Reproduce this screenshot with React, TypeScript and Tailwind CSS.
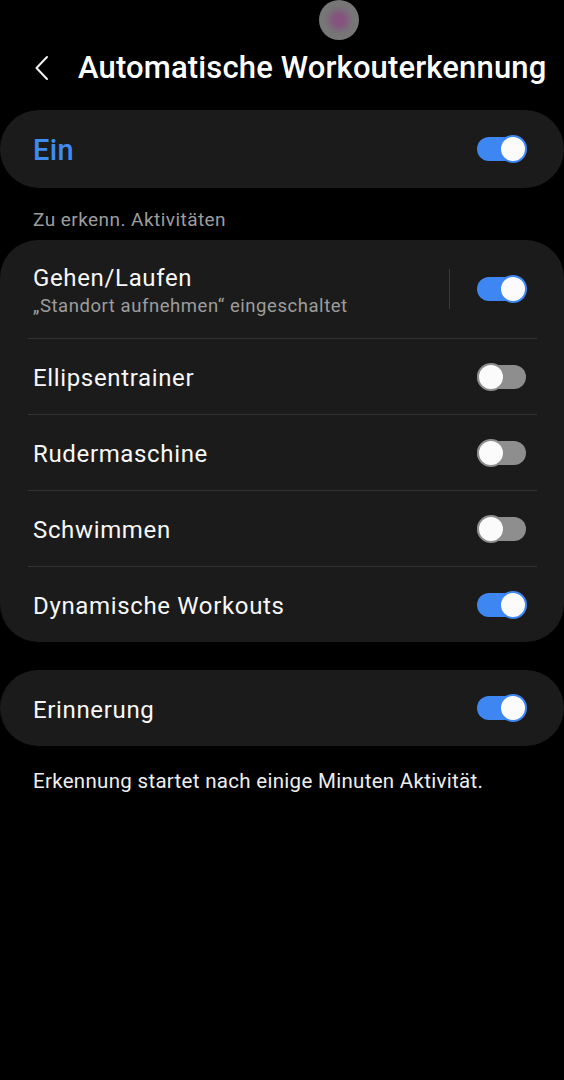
import React, { useState } from 'react';

type ToggleProps = { on: boolean; onClick?: () => void };

const Toggle: React.FC<ToggleProps> = ({ on, onClick }) => (
  <button onClick={onClick} className="relative w-[50px] h-[28px] shrink-0 focus:outline-none">
    <span
      className={`absolute left-0 right-[1px] top-[2px] h-[24px] rounded-full ${on ? 'bg-[#3e87f2]' : 'bg-[#8e8e8e]'}`}
    />
    <span
      className={`absolute top-0 w-[28px] h-[28px] rounded-full bg-[#fbfbfb] border-[2px] ${
        on ? 'right-0 border-[#3e87f2]' : 'left-0 border-[#8e8e8e]'
      }`}
    />
  </button>
);

const activities = [
  { name: 'Ellipsentrainer', on: false },
  { name: 'Rudermaschine', on: false },
  { name: 'Schwimmen', on: false },
  { name: 'Dynamische Workouts', on: true },
];

export default function App() {
  const [enabled, setEnabled] = useState(true);
  const [walking, setWalking] = useState(true);
  const [items, setItems] = useState(activities);
  const [reminder, setReminder] = useState(true);

  const flip = (i: number) =>
    setItems(items.map((it, j) => (j === i ? { ...it, on: !it.on } : it)));

  return (
    <div
      className="w-[564px] min-h-[1080px] bg-black text-[#f7f7f7]"
      style={{ fontFamily: 'Roboto, "Noto Sans", sans-serif' }}
    >
      {/* camera cutout */}
      <div className="h-[40px] flex">
        <div className="ml-[319px] w-[40px] h-[40px] rounded-full bg-[#777777] flex items-center justify-center">
          <div className="w-[20px] h-[20px] rounded-full bg-[#86517e] blur-[3px]" />
        </div>
      </div>

      {/* header */}
      <div className="h-[55px] flex items-center">
        <svg className="ml-[34px] w-[16px] h-[26px]" viewBox="0 0 16 26" fill="none">
          <path d="M13 2 L2.5 13 L13 24" stroke="#f2f2f2" strokeWidth="2" strokeLinecap="round" strokeLinejoin="round" />
        </svg>
        <h1 className="ml-[28px] pb-[1px] text-[31px] font-medium tracking-[0.15px] leading-none text-white">
          Automatische Workouterkennung
        </h1>
      </div>

      {/* master switch */}
      <div className="mt-[15px] h-[78px] rounded-[39px] bg-[#1b1b1b] flex items-center justify-between pl-[33px] pr-[37px]">
        <span className="pt-[3px] text-[29px] font-medium tracking-[0.4px] text-[#3f8cf0]">Ein</span>
        <Toggle on={enabled} onClick={() => setEnabled(!enabled)} />
      </div>

      <div className="h-[52px] pt-[12px] flex items-center pl-[33px] text-[19px] tracking-[0.45px] text-[#9d9d9d]">
        Zu erkenn. Aktivitäten
      </div>

      {/* activities */}
      <div className="rounded-[38px] bg-[#1b1b1b]">
        <div className="h-[98px] flex items-center pl-[33px] pr-[37px]">
          <div className="flex-1 flex flex-col pt-[4px]">
            <span className="text-[24px] tracking-[0.65px] leading-[30px]">Gehen/Laufen</span>
            <span className="text-[18.5px] tracking-[0.55px] leading-[26px] text-[#9d9d9d]">„Standort aufnehmen“ eingeschaltet</span>
          </div>
          <div className="w-px h-[40px] bg-[#3a3a3a] mr-[27px]" />
          <Toggle on={walking} onClick={() => setWalking(!walking)} />
        </div>
        {items.map((it, i) => (
          <div key={it.name}>
            <div className="mx-[28px] mr-[27px] h-px bg-[#333333]" />
            <div className="h-[75px] flex items-center justify-between pl-[33px] pr-[37px]">
              <span className="pt-[3px] text-[24px] tracking-[0.65px]">{it.name}</span>
              <Toggle on={it.on} onClick={() => flip(i)} />
            </div>
          </div>
        ))}
      </div>

      {/* reminder */}
      <div className="mt-[28px] h-[76px] rounded-[38px] bg-[#1b1b1b] flex items-center justify-between pl-[33px] pr-[37px]">
        <span className="pt-[3px] text-[24px] tracking-[0.65px]">Erinnerung</span>
        <Toggle on={reminder} onClick={() => setReminder(!reminder)} />
      </div>

      <p className="mt-[22px] pl-[33px] text-[20.5px] tracking-[0.3px] leading-[26px] text-[#eeeeee]">
        Erkennung startet nach einige Minuten Aktivität.
      </p>
    </div>
  );
}
